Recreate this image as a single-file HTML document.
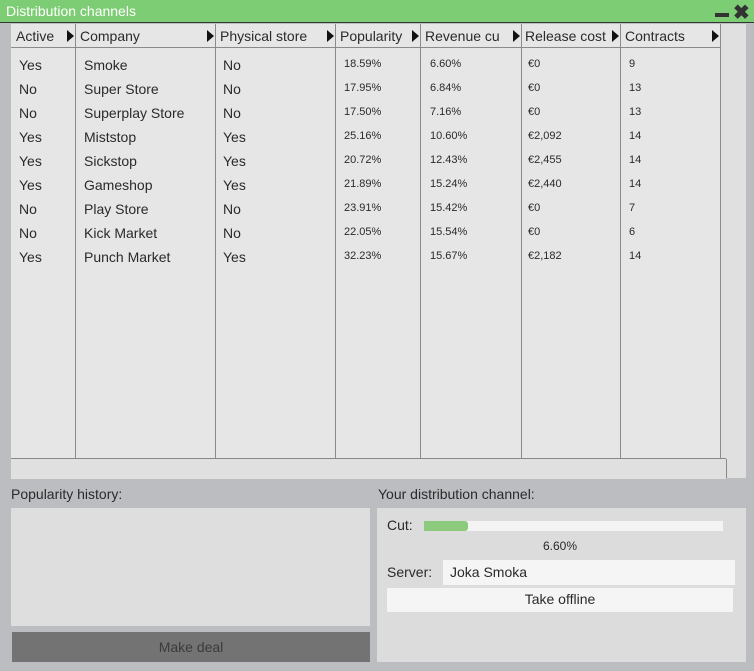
<!DOCTYPE html><html><head><style>
body{margin:0;width:754px;height:671px;background:#bcbdc1;font-family:"Liberation Sans",sans-serif;position:relative;overflow:hidden;color:#2a2a2a}
.a{position:absolute}
.t{font-size:14px;white-space:nowrap}
.arr{position:absolute;top:30px;width:0;height:0;border-top:6px solid transparent;border-bottom:6px solid transparent;border-left:7px solid #111}
.vl{position:absolute;top:24px;height:434px;width:1px;background:#8a8a8a}
</style></head><body>
<div class="a" style="left:0;top:0;width:754px;height:22px;background:#7dcd74;border-bottom:1px solid #333"></div>
<div class="a t" style="left:6px;top:3px;color:#fff;font-size:14px">Distribution channels</div>
<div class="a" style="left:715px;top:13px;width:14px;height:4px;background:#333"></div>
<div class="a" style="left:733px;top:0px;font-size:20px;font-weight:bold;color:#333">✖</div>
<div class="a" style="left:11px;top:24px;width:709px;height:434px;background:#e6e6e6"></div>
<div class="a" style="left:720px;top:24px;width:26px;height:454px;background:#e0e0e0"></div>
<div class="a" style="left:11px;top:458px;width:715px;height:20px;background:#e0e0e0;border-top:1px solid #888"></div>
<div class="a" style="left:726px;top:459px;width:1px;height:19px;background:#888"></div>
<div class="a" style="left:11px;top:47px;width:709px;height:1px;background:#8a8a8a"></div>
<div class="vl" style="left:75px"></div><div class="vl" style="left:215px"></div><div class="vl" style="left:335px"></div><div class="vl" style="left:420px"></div><div class="vl" style="left:521px"></div><div class="vl" style="left:620px"></div><div class="vl" style="left:720px"></div>
<div class="arr" style="left:67px"></div><div class="arr" style="left:207px"></div><div class="arr" style="left:327px"></div><div class="arr" style="left:412px"></div><div class="arr" style="left:513px"></div><div class="arr" style="left:612px"></div><div class="arr" style="left:712px"></div>
<div class="a t" style="left:16px;top:28px">Active</div>
<div class="a t" style="left:80px;top:28px">Company</div>
<div class="a t" style="left:220px;top:28px">Physical store</div>
<div class="a t" style="left:340px;top:28px">Popularity</div>
<div class="a t" style="left:425px;top:28px">Revenue cu</div>
<div class="a t" style="left:525px;top:28px">Release cost</div>
<div class="a t" style="left:625px;top:28px">Contracts</div>
<div id="rows"></div>
<script>
var d=[["Yes","Smoke","No","18.59%","6.60%","€0","9"],["No","Super Store","No","17.95%","6.84%","€0","13"],["No","Superplay Store","No","17.50%","7.16%","€0","13"],["Yes","Miststop","Yes","25.16%","10.60%","€2,092","14"],["Yes","Sickstop","Yes","20.72%","12.43%","€2,455","14"],["Yes","Gameshop","Yes","21.89%","15.24%","€2,440","14"],["No","Play Store","No","23.91%","15.42%","€0","7"],["No","Kick Market","No","22.05%","15.54%","€0","6"],["Yes","Punch Market","Yes","32.23%","15.67%","€2,182","14"]];
var x=[19,84,223,344,430,528,629],h="";
d.forEach(function(r,i){r.forEach(function(c,j){h+='<div class="a t" style="left:'+x[j]+'px;top:'+(57+i*24+(j>=3?1:0))+'px;font-size:'+(j>=3?11:14)+'px">'+c+'</div>'})});
document.getElementById('rows').innerHTML=h;
</script>
<div class="a t" style="left:11px;top:486px">Popularity history:</div>
<div class="a" style="left:11px;top:508px;width:359px;height:118px;background:#dedede"></div>
<div class="a" style="left:12px;top:632px;width:358px;height:30px;background:#737373"></div>
<div class="a t" style="left:12px;top:639px;width:358px;text-align:center;color:#3a3a3a">Make deal</div>
<div class="a t" style="left:378px;top:486px">Your distribution channel:</div>
<div class="a" style="left:377px;top:508px;width:369px;height:154px;background:#dcdcdc"></div>
<div class="a t" style="left:387px;top:517px">Cut:</div>
<div class="a" style="left:424px;top:521px;width:299px;height:10px;background:#f4f4f4"></div>
<div class="a" style="left:424px;top:521px;width:44px;height:10px;background:#8ccb7e;border-radius:0 3px 3px 0"></div>
<div class="a" style="left:543px;top:539px;font-size:12px">6.60%</div>
<div class="a t" style="left:387px;top:564px">Server:</div>
<div class="a" style="left:443px;top:560px;width:292px;height:25px;background:#f5f5f5"></div>
<div class="a t" style="left:450px;top:564px">Joka Smoka</div>
<div class="a" style="left:387px;top:588px;width:346px;height:24px;background:#f5f5f5"></div>
<div class="a t" style="left:387px;top:591px;width:346px;text-align:center">Take offline</div>
</body></html>
